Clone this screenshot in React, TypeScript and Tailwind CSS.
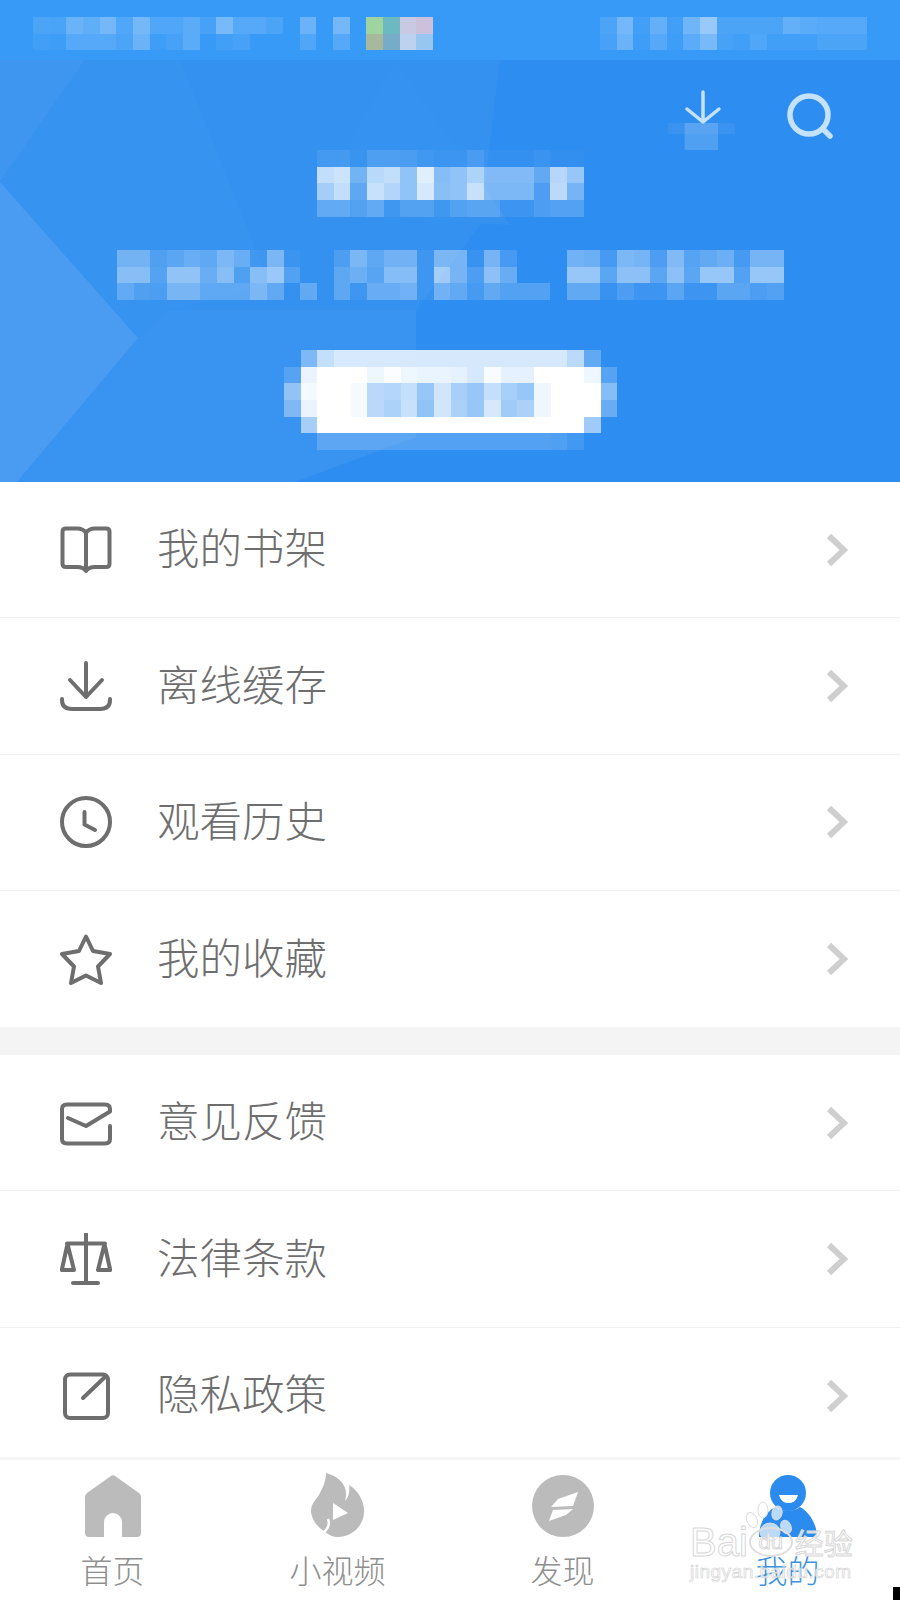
import React from "react";

const CELL = 50 / 3;
type Cell = number | string;

function Mosaic({ rows, className }: { rows: Cell[][]; className?: string }) {
  const cols = Math.max(...rows.map((r) => r.length));
  const edge = (n: number) => Math.round(n * CELL);
  return (
    <svg width={edge(cols)} height={edge(rows.length)} className={`blur-[0.6px] ${className ?? ""}`} shapeRendering="crispEdges">
      {rows.map((row, y) =>
        row.map((v, x) => {
          const box = { x: edge(x), y: edge(y), width: edge(x + 1) - edge(x), height: edge(y + 1) - edge(y) };
          if (typeof v === "string") return <rect key={`${x}-${y}`} {...box} fill={v} />;
          return v > 0 ? <rect key={`${x}-${y}`} {...box} fill="#fff" fillOpacity={v / 100} /> : null;
        })
      )}
    </svg>
  );
}

const statusLeft: Cell[][] = [
  [10, 9, 25, 20, 30, 12, 30, 12, 12, 18, 8, 32, 15, 15, 10, 0, 25, 0, 30, 0, "#9dd49f", "#6cb9c2", "#c9c9e3", "#cdc0dc"],
  [5, 3, 15, 15, 15, 10, 25, 3, 8, 18, 0, 5, 8, 0, 0, 0, 12, 0, 15, 0, "#a6b99c", "#77acc9", "#bcd2ef", "#97c7f1"],
];
const statusRight: Cell[][] = [
  [10, 30, 5, 22, 5, 28, 48, 10, 10, 10, 10, 22, 18, 15, 15, 15],
  [8, 25, 3, 15, 3, 18, 32, 8, 5, 12, 5, 5, 5, 10, 10, 10],
];
const title: Cell[][] = [
  [8, 8, 2, 12, 12, 10, 6, 3, 3, 10, 3, 3, 3, 6, 2, 2],
  [70, 75, 30, 65, 70, 45, 85, 40, 45, 60, 40, 40, 40, 25, 65, 50],
  [55, 70, 20, 72, 62, 45, 80, 42, 45, 72, 38, 38, 38, 15, 68, 35],
  [22, 22, 15, 22, 5, 15, 15, 5, 15, 18, 18, 8, 8, 15, 18, 18],
];
const subtitle: Cell[][] = [
  [30, 30, 12, 18, 25, 20, 35, 25, 5, 35, 3, 0, 0, 12, 35, 20, 30, 30, 5, 35, 35, 5, 35, 12, 0, 0, 0, 32, 30, 12, 38, 35, 15, 40, 20, 25, 30, 12, 35, 35],
  [40, 40, 15, 45, 45, 25, 40, 12, 40, 50, 15, 0, 0, 20, 28, 18, 40, 40, 5, 55, 35, 15, 45, 28, 0, 0, 0, 50, 50, 22, 45, 45, 22, 45, 22, 50, 50, 18, 50, 50],
  [22, 12, 10, 32, 32, 20, 20, 20, 35, 22, 0, 22, 0, 20, 5, 25, 25, 30, 5, 32, 25, 12, 25, 18, 18, 18, 0, 25, 25, 5, 15, 8, 8, 22, 8, 8, 22, 22, 15, 18],
];
const button: Cell[][] = [
  [0, 35, 70, 80, 80, 80, 80, 80, 80, 80, 80, 80, 80, 80, 80, 80, 80, 68, 25, 0],
  [15, 90, 100, 100, 100, 92, 98, 92, 90, 90, 88, 80, 97, 88, 88, 100, 100, 100, 92, 20],
  [45, 95, 100, 100, 95, 65, 62, 70, 50, 78, 58, 50, 72, 58, 50, 92, 100, 100, 100, 42],
  [35, 90, 100, 100, 95, 65, 58, 72, 48, 78, 60, 50, 80, 55, 60, 92, 100, 100, 100, 28],
  [0, 55, 100, 100, 100, 100, 100, 100, 100, 100, 100, 100, 100, 100, 100, 100, 100, 100, 55, 0],
  [0, 0, 18, 18, 18, 18, 18, 18, 18, 18, 18, 18, 18, 18, 18, 18, 16, 10, 0, 0],
];

const S = { fill: "none", stroke: "#6e6e6e", strokeWidth: 4, strokeLinecap: "round", strokeLinejoin: "round" } as const;

const icons: Record<string, React.ReactNode> = {
  book: (
    <path {...S} d="M26 9 C24 5.5 21 4.5 17 4.5 H6 Q2.5 4.5 2.5 7.5 V40 Q2.5 43 6 43 H17 C21 43 24 44 26 47 C28 44 31 43 35 43 H46 Q49.5 43 49.5 40 V7.5 Q49.5 4.5 46 4.5 H35 C31 4.5 28 5.5 26 9 Z M26 9 V47" />
  ),
  download: <path {...S} d="M26 3 V37 M10 20 L26 37 L42 20 M2 39 V40 Q2 49 12 49 H40 Q50 49 50 40 V39" />,
  clock: (
    <>
      <circle {...S} cx="26" cy="26" r="24" />
      <path {...S} d="M24.5 16 V28.5 L35 34" />
    </>
  ),
  star: <path {...S} d="M26 3.5 L33 18 L50 21 L38 33.5 L41 50 L26 42.5 L11 50 L14 33.5 L2 21 L19 18 Z" />,
  mail: <path {...S} d="M50 29 V42 Q50 46.5 45 46.5 H7 Q2 46.5 2 42 V12 Q2 7.5 7 7.5 H45 Q50 7.5 50 12 V14.5 L26 29 L8 21" />,
  scale: <path {...S} d="M26 1 V50 M13 50 H38 M7 10.5 H45 M7.5 11 L1.8 37 H14 Z M44.5 11 L38 37 H50.2 Z" />,
  edit: (
    <>
      <rect {...S} x="5" y="4.5" width="43" height="43.5" rx="5" />
      <path {...S} d="M23 28 L45 7" />
    </>
  ),
};

function Row({ icon, label, last }: { icon: string; label: string; last?: boolean }) {
  return (
    <div className={`flex h-[136.25px] shrink-0 items-center pl-[60px] pr-[52px] ${last ? "" : "border-b border-[#f1f1f1]"}`}>
      <svg width="52" height="52" viewBox="0 0 52 52" className="shrink-0">
        {icons[icon]}
      </svg>
      <span className="mb-[6px] ml-[45px] flex-1 text-[42.5px] leading-none font-light text-[#6e6e6e]">{label}</span>
      <svg width="22" height="34" viewBox="0 0 22 34" fill="none">
        <path d="M3 3 L18 17 L3 31" stroke="#cfcfcf" strokeWidth="6" />
      </svg>
    </div>
  );
}

function Tab({ label, active, children }: { label: string; active?: boolean; children: React.ReactNode }) {
  return (
    <div className="flex flex-col items-center">
      <div className="flex h-[64px] items-end justify-center">{children}</div>
      <span className={`mt-[14px] text-[32px] leading-[36px] font-light ${active ? "text-[#3c93e0]" : "text-[#8f8f8f]"}`}>{label}</span>
    </div>
  );
}

export default function App() {
  return (
    <div
      className="relative flex h-[1600px] w-[900px] flex-col overflow-hidden bg-white"
      style={{ fontFamily: '"Noto Sans CJK SC", "Noto Sans", sans-serif' }}
    >
      {/* Header */}
      <header className="relative h-[482px] shrink-0 bg-[#2e8df0]">
        <svg className="absolute inset-0" width="900" height="482" viewBox="0 0 900 482">
          <polygon points="0,60 500,60 480,225 416,310 416,437 295,482 0,482" fill="#3591f0" />
          <polygon points="395,60 510,225 310,215" fill="#3692f0" />
          <polygon points="0,60 85,60 0,182" fill="#3e96f1" />
          <polygon points="85,60 180,60 270,285 170,310 138,338 0,182" fill="#3793f0" />
          <polygon points="170,310 416,310 416,437 295,482 17,482 138,338" fill="#3993f1" />
          <polygon points="0,182 138,338 17,482 0,482" fill="#4a9cf2" />
        </svg>
        <div className="relative flex h-[60px] items-start bg-[#389af7] pt-[17px] pl-[33px]">
          <Mosaic rows={statusLeft} />
          <Mosaic rows={statusRight} className="mr-[33px] ml-auto" />
        </div>
        <div className="relative flex h-[90px] items-start justify-end pr-[64px] pt-[30px]">
          <svg width="72" height="60" viewBox="0 0 72 60" className="shrink-0">
            <rect x="0" y="33" width="66.7" height="11" fill="#fff" fillOpacity=".06" />
            <rect x="16.7" y="33" width="33.3" height="27" fill="#fff" fillOpacity=".16" />
            <path d="M35 2 V32 M19 19 L35 32 L51 19" fill="none" stroke="#c4e2fd" strokeWidth="3.5" strokeLinecap="round" strokeLinejoin="round" />
          </svg>
          <svg width="50" height="52" viewBox="0 0 50 52" className="mt-[2px] ml-[46px] shrink-0">
            <circle cx="23" cy="23" r="19" fill="none" stroke="#c4e2fd" strokeWidth="5.5" />
            <path d="M37 37 L44 44" stroke="#c4e2fd" strokeWidth="5.5" strokeLinecap="round" />
          </svg>
        </div>
        <div className="relative flex flex-col items-center">
          <Mosaic rows={title} />
          <Mosaic rows={subtitle} className="mt-[33px]" />
          <Mosaic rows={button} className="mt-[50px]" />
        </div>
      </header>

      {/* Menu */}
      <main className="flex min-h-0 flex-1 flex-col overflow-hidden">
        <Row icon="book" label="我的书架" />
        <Row icon="download" label="离线缓存" />
        <Row icon="clock" label="观看历史" />
        <Row icon="star" label="我的收藏" last />
        <div className="h-[28px] shrink-0 bg-[#f4f4f4]" />
        <Row icon="mail" label="意见反馈" />
        <Row icon="scale" label="法律条款" />
        <Row icon="edit" label="隐私政策" last />
      </main>

      {/* Tab bar */}
      <nav className="grid h-[143px] shrink-0 grid-cols-4 border-t-[3px] border-[#f6f6f6] bg-white pt-[13px]">
        <Tab label="首页">
          <svg width="56" height="62" viewBox="0 0 56 62">
            <path fill="#bbbbbb" d="M26 1 Q28 -0.5 30 1 L54 18 Q56 19.5 56 22 V58 Q56 62 52 62 H37 V47 A9 9 0 0 0 19 47 V62 H4 Q0 62 0 58 V22 Q0 19.5 2 18 Z" />
          </svg>
        </Tab>
        <Tab label="小视频">
          <svg width="54" height="64" viewBox="0 0 54 64">
            <path fill="#bbbbbb" d="M15 0 C30 4 38 14 34 28 C38 24 39 18 38 12 C48 18 54 30 53 40 C52 54 40 64 27 64 C22 64 18 62 14 59 C10 56 1 50 0 38 C0 30 6 26 9 20 C12 14 15 8 15 0 Z" />
            <path fill="none" stroke="#fff" strokeWidth="2.5" d="M17 46 C19 51 17 56 12 60" />
            <path fill="#fff" d="M22 30 L37 40 L22 47 Z" />
          </svg>
        </Tab>
        <Tab label="发现">
          <svg width="62" height="62" viewBox="0 0 62 62">
            <circle cx="31" cy="31" r="31" fill="#bbbbbb" />
            <path fill="#fff" d="M46 17 L41 31 L19 32 L26 24 Z M17 46 L21 35 L41 34 L34 40 Z" />
          </svg>
        </Tab>
        <Tab label="我的" active>
          <svg width="60" height="62" viewBox="0 0 60 62">
            <circle cx="30" cy="18" r="18" fill="#2b8bee" />
            <path fill="#2b8bee" d="M18 32 C8 36 1 48 1 62 H59 C59 48 50 36 42 32 C36 37 24 37 18 32 Z" />
            <path fill="#fff" d="M21 20 H40 C38 27 34 28 30.5 28 C27 28 23 27 21 20 Z" />
          </svg>
        </Tab>
      </nav>

      {/* Baidu watermark */}
      <div className="pointer-events-none absolute top-[1500px] left-[690px] w-[170px]">
        <svg width="80" height="56" viewBox="0 0 80 56" className="absolute top-0 left-[46px]">
          <g fill="#fff" fillOpacity=".68" stroke="#dcdcdc" strokeWidth="1">
            <ellipse cx="16" cy="20" rx="5" ry="8" transform="rotate(-25 16 20)" />
            <ellipse cx="27" cy="10" rx="5" ry="8" />
            <ellipse cx="41" cy="13" rx="5" ry="7" transform="rotate(15 41 13)" />
            <ellipse cx="50" cy="27" rx="5" ry="7" transform="rotate(-25 50 27)" />
            <ellipse cx="34" cy="32" rx="10" ry="9" />
          </g>
        </svg>
        <div className="relative mt-[27px] flex h-[30px] items-center text-[40px] leading-none text-white/80 [-webkit-text-stroke:1px_#d8d8d8]" style={{ fontFamily: '"Liberation Sans", sans-serif' }}>
          <span>Bai</span>
          <span className="ml-[1px] flex h-[30px] w-[44px] shrink-0 items-center justify-center rounded-[50%] border-[2px] border-[#dedede] text-[22px] text-white/80">du</span>
          <span className="ml-[2px] text-[29px] whitespace-nowrap" style={{ fontFamily: '"Noto Sans CJK SC", sans-serif' }}>经验</span>
        </div>
        <div className="relative mt-[5px] text-[19px] leading-none tracking-[0.5px] whitespace-nowrap text-white/70 [-webkit-text-stroke:0.7px_#d4d4d4]" style={{ fontFamily: '"Liberation Sans", sans-serif' }}>
          jingyan.baidu.com
        </div>
      </div>

      {/* Scan artefact at the corner */}
      <div className="absolute right-0 bottom-0 h-[13px] w-[7px] bg-black" />
    </div>
  );
}
